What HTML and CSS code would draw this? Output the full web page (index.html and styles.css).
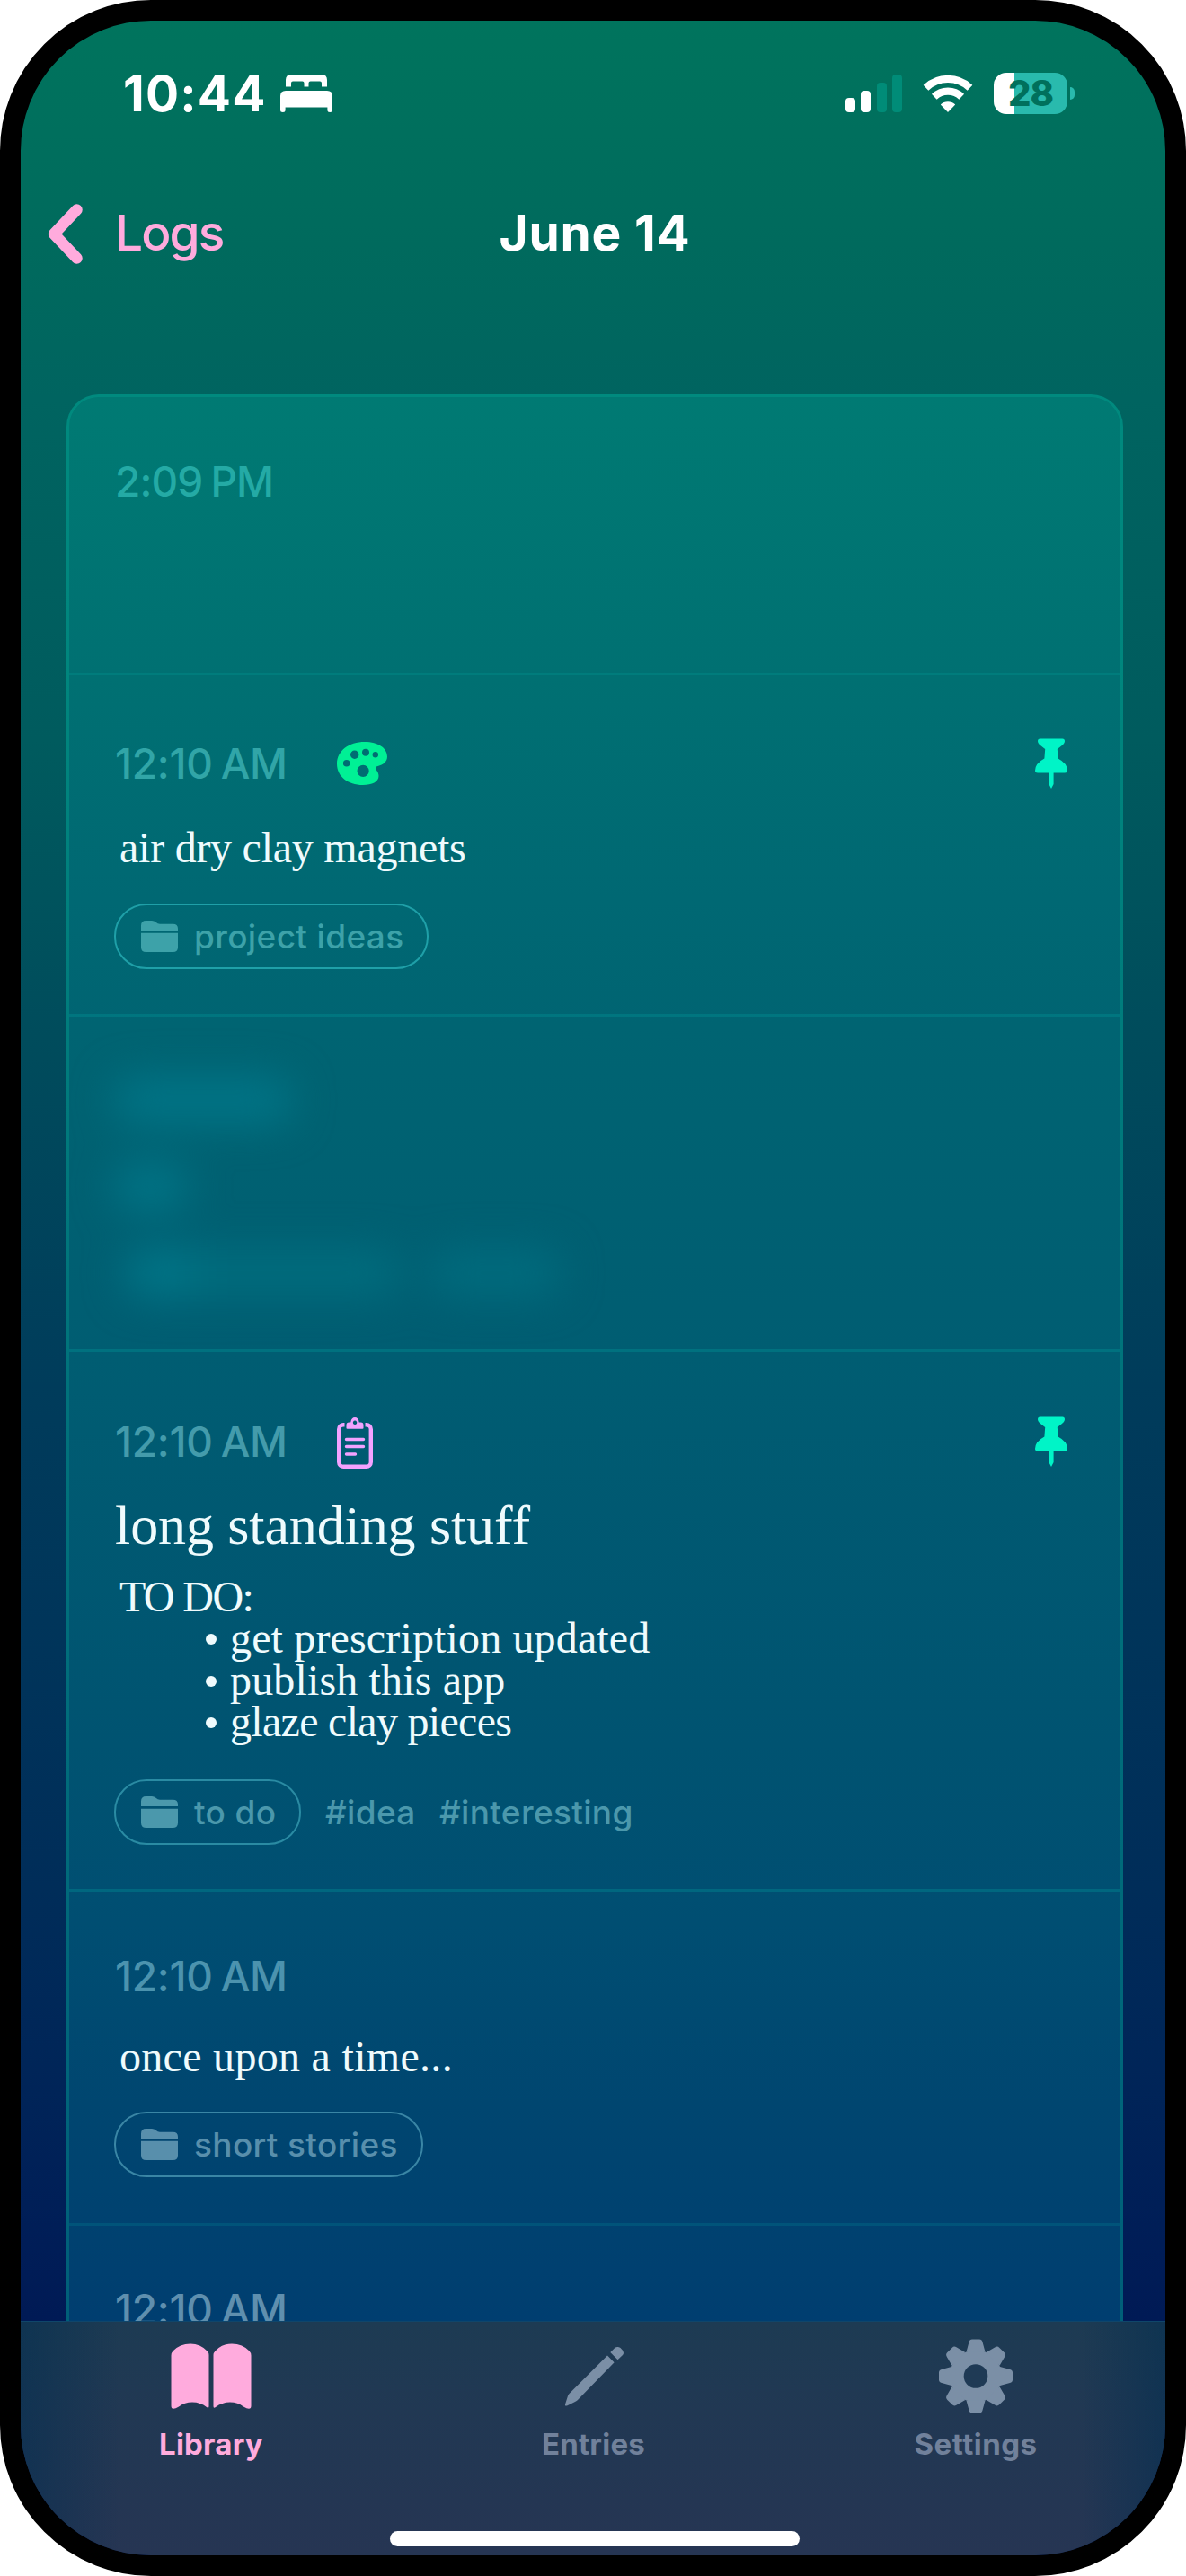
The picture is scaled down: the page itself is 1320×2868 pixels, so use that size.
FILE: index.html
```html
<!DOCTYPE html>
<html lang="en">
<head>
<meta charset="utf-8">
<title>June 14</title>
<link rel="stylesheet" href="styles.css">
</head>
<body>
<svg width="0" height="0" class="defs">
  <symbol id="folder" viewBox="0 0 41 35"><path d="M0 11V5.500Q0 0 5.500 0H12Q14.500 0 16.500 1.800Q18.500 3.800 21 3.800H35.500Q41 3.800 41 9V11ZM0 13.800H41V29.500Q41 35 35.500 35H5.500Q0 35 0 29.500Z" fill="currentColor"/></symbol>
  <symbol id="pin" viewBox="0 0 36 56"><path d="M5.500 .5H30.500Q33 .5 33 3.300Q33 6 29 8.800L24.800 12L25.600 22.500Q36 28 36 36Q36 38.500 33 38.500H3Q0 38.500 0 36Q0 28 10.400 22.500L11.200 12L7 8.800Q3 6 3 3.300Q3 .5 5.500 .5ZM15.400 38H20.600V51L18 56L15.400 51Z" fill="currentColor"/></symbol>
</svg>
<div class="phone">
  <header class="status">
    <span class="clock">10:44</span>
    <svg class="bed" viewBox="0 0 58 42"><path d="M6 13.500V6Q6 0 12 0H46Q52 0 52 6V13.500H46V9.500Q46 7.500 44 7.500H33.500Q31.500 7.500 31.500 9.500V13.500H26.500V9.500Q26.500 7.500 24.500 7.500H14Q12 7.500 12 9.500V13.500ZM0 39.500V24Q0 18 6 18H52Q58 18 58 24V39.500Q58 42 55.200 42Q52.400 42 52.400 39.500V36.500H5.600V39.500Q5.600 42 2.800 42Q0 42 0 39.500Z" fill="#fff"/></svg>
    <div class="bars"><i></i><i></i><i class="off"></i><i class="off"></i></div>
    <svg class="wifi" viewBox="0 0 54 42"><g fill="none" stroke="#fff" stroke-width="8.200"><path d="M2.500 14.700A35.500 35.500 0 0 1 51.500 14.700"/><path d="M11.800 24.800A22 22 0 0 1 42.200 24.800"/></g><path d="M27 42L18.800 33.500A11.800 11.800 0 0 1 35.200 33.500Z" fill="#fff"/></svg>
    <div class="battery">28</div><i class="nub"></i>
  </header>
  <nav class="nav">
    <svg class="back" viewBox="0 0 39 67"><path d="M32.500 6.500L7 33.500L32.500 60.500" fill="none" stroke="#ffabdd" stroke-width="12.500" stroke-linecap="round" stroke-linejoin="round"/></svg>
    <span class="logs">Logs</span>
    <h1>June 14</h1>
  </nav>
  <main class="feed">
    <div class="card">
      <article class="e1"><div class="row"><time>2:09<b></b>PM</time></div></article>
      <article class="e2">
        <div class="row"><time>12:10<b></b>AM</time>
          <svg class="palette" viewBox="0 0 56 48"><path fill="#00f095" fill-rule="evenodd" d="M31 0C46 0 56 7 56 16.500C56 22 51.500 25.500 45.500 27C42.500 27.700 42.500 29.500 44 31.500C45.500 33.500 46.500 35.500 46.500 38C46.500 44.500 39 48 29 48C12 48 0 38.500 0 24.500C0 10 13 0 31 0ZM15 14.300a4.700 4.700 0 1 0 9.400 0a4.700 4.700 0 1 0 -9.400 0ZM28 11.700a4 4 0 1 0 8 0a4 4 0 1 0 -8 0ZM39.600 14.300a3.200 3.200 0 1 0 6.400 0a3.200 3.200 0 1 0 -6.400 0ZM6.900 23.700a3.800 3.800 0 1 0 7.600 0a3.800 3.800 0 1 0 -7.600 0ZM22.500 32.300a6.600 6.600 0 1 0 13.200 0a6.600 6.600 0 1 0 -13.200 0Z"/></svg>
          <svg class="pin"><use href="#pin"/></svg></div>
        <p class="note a">air dry clay magnets</p>
        <div class="tags"><span class="pill w1"><svg><use href="#folder"/></svg><em class="t1">project ideas</em></span></div>
      </article>
      <article class="e3"><div class="hidden-entry"><i class="h1"></i><i class="h2"></i><i class="h3"></i><i class="h4"></i></div></article>
      <article class="e4">
        <div class="row"><time>12:10<b></b>AM</time>
          <svg class="clip" viewBox="0 0 40 57"><rect x="2.200" y="8.200" width="35.600" height="46.600" rx="5" fill="none" stroke="#f3a2ff" stroke-width="4.400"/><path d="M8.500 5H31.500V13H8.500Z" fill="#00586f"/><path fill="#f3a2ff" fill-rule="evenodd" d="M10.500 12V8.500Q10.500 5.500 13.500 5.500H15.300Q16 0 20 0Q24 0 24.700 5.500H26.500Q29.500 5.500 29.500 8.500V12Q29.500 12.800 28.500 12.800H11.500Q10.500 12.800 10.500 12ZM20 3.600a2.200 2.200 0 1 0 .1 0Z"/><path d="M10.500 24.500H29.500M10.500 32.500H29.500M10.500 41H20.500" stroke="#f3a2ff" stroke-width="3.400" stroke-linecap="round"/></svg>
          <svg class="pin"><use href="#pin"/></svg></div>
        <h2>long standing stuff</h2>
        <p class="note todo">TO DO:</p>
        <ul><li class="l1">get prescription updated</li><li class="l2">publish this app</li><li class="l3">glaze clay pieces</li></ul>
        <div class="tags"><span class="pill w2"><svg><use href="#folder"/></svg><em class="t2">to do</em></span><em class="g1">#idea</em><em class="g2">#interesting</em></div>
      </article>
      <article class="e5">
        <div class="row"><time>12:10<b></b>AM</time></div>
        <p class="note o">once upon a time...</p>
        <div class="tags"><span class="pill w3"><svg><use href="#folder"/></svg><em class="t3">short stories</em></span></div>
      </article>
      <article class="e6"><div class="row"><time>12:10<b></b>AM</time></div></article>
    </div>
  </main>
  <footer class="tabs">
    <div class="tab on"><svg viewBox="0 0 100 86"><path transform="translate(0 2.500)" fill="currentColor" d="M5.500 20Q5.500 17 7.500 15Q15 7 27 7Q38 7 45.500 15Q47.500 17 47.500 19.500V76.500Q47.500 79.500 45 77.500Q38 72 29 72Q20.500 72 14 77Q5.500 82 5.500 76ZM94.500 20Q94.500 17 92.500 15Q85 7 73 7Q62 7 54.500 15Q52.500 17 52.500 19.500V76.500Q52.500 79.500 55 77.500Q62 72 71 72Q79.500 72 86 77Q94.500 82 94.500 76Z"/></svg><span class="s1">Library</span></div>
    <div class="tab"><svg viewBox="0 0 100 86"><path fill="currentColor" d="M65 22.500L72.600 30.200L32 72Q31 73 29 74L20.500 78.200Q17 79.500 18.300 76L21 67.500Q21.500 66 22.500 65ZM68.300 19L72.800 14.500Q76 12 79.500 14Q82.500 16.500 83 19.500Q83 21 82 22L76.500 27.300Z"/></svg><span class="s2">Entries</span></div>
    <div class="tab"><svg viewBox="-50 -45.500 100 86"><g fill="currentColor"><circle r="29"/><g id="teeth"><path id="tooth" d="M-10.500 -27L-7.500 -38Q-6.800 -41 -4 -41H4Q6.800 -41 7.500 -38L10.500 -27Z"/><use href="#tooth" transform="rotate(45)"/><use href="#tooth" transform="rotate(90)"/><use href="#tooth" transform="rotate(135)"/></g><use href="#teeth" transform="rotate(180)"/></g><circle r="13.300" fill="#1f3a55"/></svg><span class="s3">Settings</span></div>
    <i class="home"></i>
  </footer>
</div>
</body>
</html>
```
FILE: styles.css
```css
* { box-sizing: border-box; }
body { margin: 0; background: #fff; font-family: Inter, "Liberation Sans", sans-serif; }
i, em { font-style: normal; display: block; }
svg { display: block; flex: none; overflow: visible; }
.defs { position: absolute; }
.phone {
  width: 1320px; height: 2868px; border: 23px solid #000; border-radius: 168px; overflow: hidden;
  display: flex; flex-direction: column;
  background: linear-gradient(180deg, #00745d 0, #006a5d 250px, #006460 420px, #005b5e 800px, #004c5c 1130px, #003c5b 1520px, #002d59 2080px, #001d57 2480px, #001a55 2560px);
}
.status { height: 120px; flex: none; display: flex; align-items: flex-start; color: #fff; }
.clock { width: 174px; margin: 48px 0 0 114px; flex: none; font-size: 55px; line-height: 67px; font-weight: 700; letter-spacing: 1.200px; white-space: nowrap; }
.bed { width: 58px; height: 42px; margin: 60px 0 0 .5px; }
.bars { display: flex; align-items: flex-end; gap: 6.500px; height: 42px; margin: 60px 0 0 571px; }
.bars i { width: 11px; height: 16px; border-radius: 4px; background: #fff; }
.bars i:nth-child(2) { height: 24px; }
.bars i.off { background: #008c78; height: 33px; }
.bars i:last-child { height: 42px; }
.wifi { width: 54px; height: 42px; margin: 60px 0 0 24px; }
.battery { width: 82px; height: 46px; margin: 58px 0 0 24px; border-radius: 14px; background: linear-gradient(90deg, #fff 23px, #29baad 23px); color: #00705c; font-size: 40px; line-height: 46px; font-weight: 800; text-align: center; letter-spacing: -1px; }
.nub { width: 5px; height: 14px; margin: 74px 0 0 2.500px; border-radius: 0 6px 6px 0; background: #29baad; }
.nav { height: 190px; flex: none; display: grid; grid-template-columns: 75px 322px 424px 1fr; align-items: start; padding: 59px 0 0 30px; }
.back { width: 39px; height: 67px; margin-top: 25px; }
.logs, h1 { font-size: 55px; line-height: 67px; margin: 24px 0 0; white-space: nowrap; }
.logs { color: #ffabdd; font-weight: 500; letter-spacing: -1.900px; }
h1 { color: #fff; font-weight: 700; text-align: center; letter-spacing: .8px; }
.feed { flex: none; height: 2251px; overflow: hidden; padding: 106px 47px 0 51px; }
.card {
  height: 2400px; border: 3px solid rgba(0,190,170,.42); border-radius: 36px;
  background: linear-gradient(180deg, #007a73 0, #007072 311px, #006873 560px, #006472 700px, #005d72 1064px, #005371 1500px, #004e72 1700px, #004670 1900px, #003e70 2144px) padding-box;
}
article { border-bottom: 3px solid rgba(0,160,160,.3); overflow: hidden; padding-left: 51px; }
.e1 { height: 310px; padding-top: 64px; border-color: rgba(0,170,160,.22); }
.e2 { height: 380px; padding-top: 68px; }
.e3 { height: 372.500px; }
.e4 { height: 601px; padding-top: 70px; }
.e5 { height: 372.500px; padding-top: 64px; border-color: rgba(0,150,160,.22); }
.e6 { height: 366px; padding-top: 63px; border: 0; }
.row { display: flex; height: 60px; align-items: center; }
time { flex: none; width: 247px; font-size: 46px; line-height: 60px; font-weight: 500; white-space: nowrap; letter-spacing: -.3px; }
.e1 time { color: #24aaa5; letter-spacing: -.9px; } .e2 time { color: #31a5a7; } .e4 time { color: #449bab; } .e5 time { color: #4c93ae; } .e6 time { color: #5f8fae; }
time b { display: inline-block; width: 9px; }
.palette { width: 56px; height: 48px; }
.clip { width: 40px; height: 57px; margin-top: 3px; }
.pin { width: 36px; height: 56px; margin-left: auto; margin-right: 59px; color: #00f4c7; }
p, h2 { margin: 0; color: #effbfd; font-family: "Liberation Serif", serif; font-weight: 400; white-space: nowrap; }
.note, ul { font-size: 48px; line-height: 46.500px; }
.note { margin-left: 5px; }
h2 { font-size: 62px; line-height: 66px; margin-top: 30px; letter-spacing: -.1px; }
ul { margin: 0; padding: 0 0 0 127px; list-style: none; color: #effbfd; font-family: "Liberation Serif", serif; }
li { display: flex; align-items: center; white-space: nowrap; height: 46.500px; }
li::before { content: ""; width: 12px; height: 12px; border-radius: 50%; background: #effbfd; margin: 2px 15px 0 -26px; flex: none; }
.l1, .l2 { letter-spacing: .15px; }
.l3 { letter-spacing: -.7px; }
.tags { display: flex; align-items: center; height: 73px; font-size: 37px; font-weight: 500; letter-spacing: .35px; margin-left: -1px; }
.tags em { color: #4b98ac; white-space: nowrap; }
.pill { height: 73px; flex: none; border: 2px solid; border-radius: 36px; display: flex; align-items: center; padding-left: 28px; }
.pill svg { width: 41px; height: 35px; margin-right: 18px; color: #4b98ac; }
.w1 { width: 350px; border-color: #1fa0a8; } .w1 svg, .tags .t1 { color: #3da2a9; }
.w2 { width: 208px; border-color: #2a8ba3; }
.w3 { width: 344px; border-color: #3a86a5; } .w3 svg, .tags .t3 { color: #588fac; }
.g1 { margin-left: 27px; width: 127px; }
.a { margin-top: 41px; letter-spacing: -.25px; } .e2 .tags { margin-top: 38px; }
.todo { margin-top: 24px; letter-spacing: -1.600px; } .e4 .tags { margin-top: 40px; }
.o { margin-top: 37px; letter-spacing: .3px; } .e5 .tags { margin-top: 38px; }
.hidden-entry { display: grid; grid-template-columns: 350px 180px; row-gap: 46px; padding-top: 68px; filter: blur(23px); }
.hidden-entry i { background: #007587; height: 50px; border-radius: 20px; }
.hidden-entry .h1 { width: 196px; grid-column: 1 / 3; }
.hidden-entry .h2 { width: 80px; grid-column: 1 / 3; }
.hidden-entry .h3 { width: 304px; margin-left: 12px; background: linear-gradient(90deg, #007789 60px, #006d7e 90px); }
.hidden-entry .h4 { background: #006c7e; width: 145px; }
.tabs { flex: 1; display: grid; grid-template-columns: repeat(3, 425.500px); justify-content: center; align-content: start; position: relative; background: linear-gradient(90deg, rgba(0,45,80,.5), transparent 110px, transparent 1180px, rgba(0,45,80,.5)), linear-gradient(180deg, #1d3b53, #213853 100px, #263553); border-top: 1px solid #0f466b; }
.tab { display: flex; flex-direction: column; align-items: center; padding-left: 1px; color: #7b8fa6; }
.tab svg { width: 100px; height: 86px; margin-top: 15px; }
.tab span { font-size: 33px; line-height: 40px; font-weight: 700; margin-top: 15px; color: #71819b; white-space: nowrap; letter-spacing: .2px; }
.tab .s3 { letter-spacing: .5px; }
.tab.on, .tab.on span { color: #ffabdd; }
.home { position: absolute; left: 411px; top: 233px; width: 456px; height: 17px; border-radius: 9px; background: #fff; }
```
